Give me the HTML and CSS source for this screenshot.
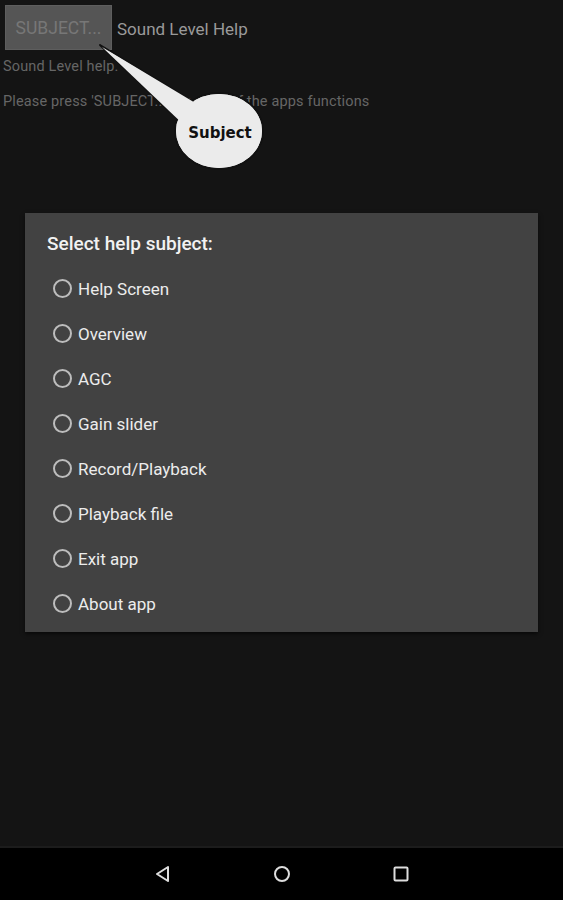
FILE: index.html
```html
<!DOCTYPE html>
<html>
<head>
<meta charset="utf-8">
<link rel="stylesheet" href="styles.css">
</head>
<body>
<div class="screen">
  <div class="app">
    <div class="topbar">
      <div class="subject-btn">SUBJECT...</div>
      <div class="app-title">Sound Level Help</div>
    </div>
    <p class="help-line first">Sound Level help.</p>
    <p class="help-line">Please press 'SUBJECT...' for a list of the apps functions</p>

    <svg class="callout" width="200" height="140" viewBox="0 0 200 140">
      <ellipse cx="123" cy="95" rx="44" ry="38" fill="#ebebeb" stroke="#111" stroke-width="2"/>
      <polygon points="4,9 106,71 90,91" fill="#ebebeb" stroke="#111" stroke-width="2" stroke-linejoin="round"/>
      <ellipse cx="123" cy="95" rx="43" ry="37" fill="#ebebeb"/>
      <polygon points="6,11 106,71 90,91" fill="#ebebeb"/>
      <text x="124" y="102" text-anchor="middle" class="callout-text">Subject</text>
    </svg>

    <div class="dialog">
      <div class="dialog-title">Select help subject:</div>
      <ul class="options">
        <li class="option"><span class="radio"></span>Help Screen</li>
        <li class="option"><span class="radio"></span>Overview</li>
        <li class="option"><span class="radio"></span>AGC</li>
        <li class="option"><span class="radio"></span>Gain slider</li>
        <li class="option"><span class="radio"></span>Record/Playback</li>
        <li class="option"><span class="radio"></span>Playback file</li>
        <li class="option"><span class="radio"></span>Exit app</li>
        <li class="option"><span class="radio"></span>About app</li>
      </ul>
    </div>
  </div>
  <div class="navbar">
    <svg class="nav-icon" width="20" height="20" viewBox="0 0 20 20"><path d="M15 3 L4 10 L15 17 Z" fill="none" stroke="#ddd" stroke-width="2" stroke-linejoin="round"/></svg>
    <svg class="nav-icon" width="20" height="20" viewBox="0 0 20 20"><circle cx="10" cy="10" r="7" fill="none" stroke="#ddd" stroke-width="2"/></svg>
    <svg class="nav-icon" width="20" height="20" viewBox="0 0 20 20"><rect x="3.5" y="3.5" width="13" height="13" rx="1" fill="none" stroke="#ddd" stroke-width="2"/></svg>
  </div>
</div>
</body>
</html>
```

FILE: styles.css
```css
html, body {
  margin: 0;
  padding: 0;
  background: #141414;
  font-family: Roboto, "Noto Sans", Arial, sans-serif;
}
.screen {
  width: 563px;
  height: 900px;
  display: flex;
  flex-direction: column;
}
.app {
  flex: 1;
  position: relative;
  border-bottom: 2px solid #1c1c1c;
}
.topbar {
  display: flex;
  align-items: center;
  padding: 5px 0 0 5px;
  gap: 5px;
}
.subject-btn {
  width: 107px;
  height: 45px;
  box-sizing: border-box;
  background: #555;
  border: 1px solid #5e5e5e;
  color: #777;
  font-size: 17.5px;
  display: flex;
  align-items: center;
  justify-content: center;
}
.app-title {
  color: #9a9a9a;
  font-size: 17px;
  margin-top: 2px;
}
.help-line {
  margin: 17px 0 0 3px;
  color: #666;
  font-size: 14.5px;
  letter-spacing: 0.15px;
  line-height: 18px;
}
.help-line.first {
  margin-top: 8px;
}
.callout {
  position: absolute;
  left: 96px;
  top: 36px;
  overflow: visible;
}
.callout-text {
  font-family: "DejaVu Sans", sans-serif;
  font-weight: bold;
  font-size: 15px;
  fill: #111;
}
.dialog {
  margin: 102px 25px 0 25px;
  background: #424242;
  box-shadow: 0 2px 4px rgba(0,0,0,0.6);
  padding: 20px 22px 18px 22px;
  height: 419px;
  box-sizing: border-box;
}
.dialog-title {
  color: #f2f2f2;
  font-size: 19px;
  font-weight: 500;
  line-height: 22px;
}
.options {
  list-style: none;
  margin: 11px 0 0 0;
  padding: 0;
}
.option {
  display: flex;
  align-items: center;
  height: 45px;
  color: #ececec;
  font-size: 17px;
  padding-left: 6px;
}
.radio {
  width: 15px;
  height: 15px;
  border: 2px solid #bdbdbd;
  border-radius: 50%;
  margin-right: 6px;
}
.navbar {
  height: 52px;
  background: #000;
  display: flex;
  align-items: center;
  justify-content: center;
  gap: 99px;
}
.nav-icon {
  display: block;
}
```
